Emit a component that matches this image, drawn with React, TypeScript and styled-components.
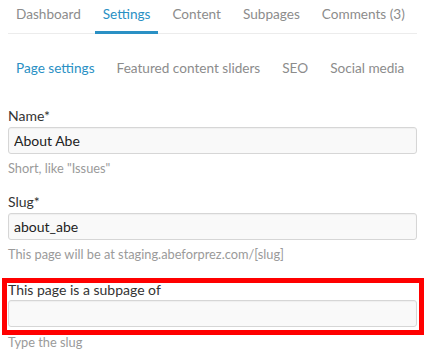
import styled, { createGlobalStyle } from "styled-components";

const GlobalStyle = createGlobalStyle`
  html, body {
    margin: 0;
    padding: 0;
    background: #ffffff;
  }
  body {
    font-family: Lato, "Open Sans", sans-serif;
    color: #333333;
  }
`;

const Page = styled.div`
  padding: 0 9px 0 8px;
`;

const TabBar = styled.nav`
  display: flex;
  gap: 6px;
  border-bottom: 1px solid #ececec;
`;

const Tab = styled.a<{ $active?: boolean }>`
  display: block;
  flex-shrink: 0;
  white-space: nowrap;
  padding: 4px 8px 7px;
  line-height: 20px;
  font-size: 13.6px;
  color: ${(p) => (p.$active ? "#2a90c4" : "#8c8c8c")};
  border-bottom: 3px solid ${(p) => (p.$active ? "#2a90c4" : "transparent")};
  margin-bottom: -1px;
  text-decoration: none;
`;

const SubBar = styled.nav`
  display: flex;
  gap: 6px;
  margin-top: 24px;
  margin-bottom: 28px;
`;

const SubTab = styled.a<{ $active?: boolean }>`
  display: block;
  flex-shrink: 0;
  white-space: nowrap;
  padding: 0 8px;
  line-height: 20px;
  font-size: 13.6px;
  color: ${(p) => (p.$active ? "#2a90c4" : "#8c8c8c")};
  text-decoration: none;
`;

const Field = styled.div<{ $highlight?: boolean }>`
  margin-bottom: 15px;
  ${(p) =>
    p.$highlight &&
    `
    border: 5px solid #ff0000;
    margin: 14px -7px 0 -6px;
    padding: 0 2px 3px 1px;
  `}
`;

const Label = styled.label<{ $tight?: boolean }>`
  display: block;
  font-size: 14px;
  line-height: ${(p) => (p.$tight ? "13px" : "20px")};
  color: #333333;
  margin-bottom: ${(p) => (p.$tight ? "4px" : "1px")};
`;

const Input = styled.input`
  display: block;
  box-sizing: border-box;
  width: 100%;
  height: 27px;
  padding: 0 5px;
  font-family: Lato, "Open Sans", sans-serif;
  font-size: 14px;
  color: #222222;
  background: #f9f9f9;
  border: 1px solid #d6d6d6;
  border-radius: 3px;
  box-shadow: inset 0 1px 1px rgba(0, 0, 0, 0.04);
  outline: none;
`;

const Help = styled.div<{ $tight?: boolean }>`
  font-size: 12.8px;
  line-height: ${(p) => (p.$tight ? "14px" : "18px")};
  color: #9a9a9a;
  margin-top: ${(p) => (p.$tight ? "0" : "5px")};
`;

const tabs = ["Dashboard", "Settings", "Content", "Subpages", "Comments (3)"];
const subTabs = ["Page settings", "Featured content sliders", "SEO", "Social media"];

export default function App() {
  return (
    <Page>
      <GlobalStyle />
      <TabBar>
        {tabs.map((t) => (
          <Tab key={t} $active={t === "Settings"}>
            {t}
          </Tab>
        ))}
      </TabBar>
      <SubBar>
        {subTabs.map((t) => (
          <SubTab key={t} $active={t === "Page settings"}>
            {t}
          </SubTab>
        ))}
      </SubBar>

      <Field>
        <Label>Name*</Label>
        <Input defaultValue="About Abe" />
        <Help>Short, like "Issues"</Help>
      </Field>

      <Field>
        <Label>Slug*</Label>
        <Input defaultValue="about_abe" />
        <Help>This page will be at staging.abeforprez.com/[slug]</Help>
      </Field>

      <Field $highlight>
        <Label $tight>This page is a subpage of</Label>
        <Input />
      </Field>
      <Help $tight>Type the slug</Help>
    </Page>
  );
}
